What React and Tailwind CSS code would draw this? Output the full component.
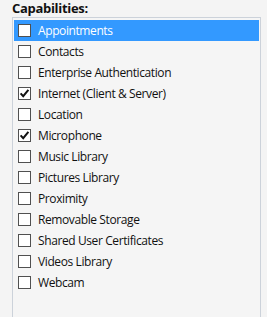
import React from "react";

const items = [
  { label: "Appointments", checked: false, selected: true },
  { label: "Contacts", checked: false },
  { label: "Enterprise Authentication", checked: false },
  { label: "Internet (Client & Server)", checked: true },
  { label: "Location", checked: false },
  { label: "Microphone", checked: true },
  { label: "Music Library", checked: false },
  { label: "Pictures Library", checked: false },
  { label: "Proximity", checked: false },
  { label: "Removable Storage", checked: false },
  { label: "Shared User Certificates", checked: false },
  { label: "Videos Library", checked: false },
  { label: "Webcam", checked: false },
];

const CheckBox = ({ checked }) => (
  <div className="w-[13px] h-[13px] shrink-0 border border-[#505050] bg-white flex items-center justify-center">
    {checked && (
      <svg width="11" height="11" viewBox="0 0 11 11">
        <path d="M1.6 5.4 L4.2 8.2 L9.4 1.9" fill="none" stroke="#111" strokeWidth="2" />
      </svg>
    )}
  </div>
);

export default function App() {
  return (
    <div
      className="w-[267px] h-[317px] overflow-hidden bg-[#f4f4f4] pl-3 text-[#111]"
      style={{ fontFamily: '"Open Sans", "Noto Sans", sans-serif' }}
    >
      <div className="text-[13px] font-bold leading-[17px] h-[17px] tracking-[-0.3px]">Capabilities:</div>
      <div className="w-[249px] h-[320px] border border-[#ccd2da] bg-[#f5f5f5] px-px pt-[2px]">
        {items.map((item) => (
          <div
            key={item.label}
            className={
              "h-[21px] flex items-center gap-[7px] pl-[4px] text-[12px] tracking-[-0.4px] " +
              (item.selected ? "bg-[#3399ff] text-white" : "")
            }
          >
            <CheckBox checked={item.checked} />
            <span className="leading-none">{item.label}</span>
          </div>
        ))}
      </div>
    </div>
  );
}
